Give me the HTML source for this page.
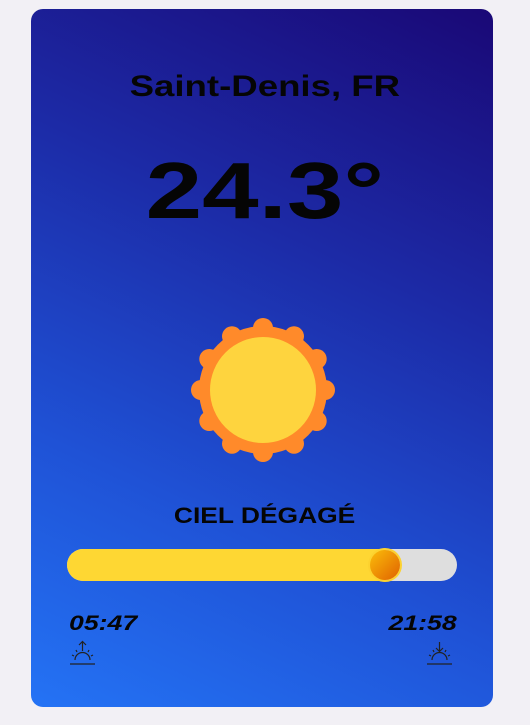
<!DOCTYPE html>
<html><head><meta charset="utf-8"><style>
html,body{margin:0;padding:0}
body{width:530px;height:725px;background:#f2f0f5;position:relative;overflow:hidden;font-family:"Liberation Sans",sans-serif;color:#050505}
.card{position:absolute;left:31px;top:9px;width:462px;height:698px;border-radius:12px;background:linear-gradient(205deg,#1a0876 0%,#1c2aa6 35%,#1f52d6 70%,#2473f5 100%);overflow:hidden}
.t{position:absolute;left:0;width:530px;text-align:center;font-weight:bold;white-space:nowrap}
.t span{display:inline-block}
.bar{position:absolute;left:67px;top:549px;width:390px;height:32px;border-radius:16px;background:#dedede;overflow:hidden}
.fill{position:absolute;left:0;top:0;height:32px;width:318px;background:#fed733}
.knob{position:absolute;left:370px;top:550px;width:30px;height:30px;border-radius:50%;background:linear-gradient(135deg,#fbbd0a,#e06200);box-shadow:0 0 0 2px #fcd22f}
.tm{position:absolute;top:612px;font-style:italic;font-weight:bold;font-size:21px}
</style></head><body>
<div class="card"></div>
<div class="t" style="top:70px;font-size:30px;"><span style="transform:scaleX(1.22)">Saint-Denis, FR</span></div>
<div class="t" style="top:145px;font-size:80px;"><span style="transform:scaleX(1.27)">24.3°</span></div>
<svg style="position:absolute;left:0;top:0" width="530" height="725">
<g fill="#ff8a2a">
<circle cx="263" cy="390" r="64"/>
<circle cx="263" cy="328" r="10"/><circle cx="294" cy="336.3" r="10"/><circle cx="316.7" cy="359" r="10"/><circle cx="325" cy="390" r="10"/><circle cx="316.7" cy="421" r="10"/><circle cx="294" cy="443.7" r="10"/><circle cx="263" cy="452" r="10"/><circle cx="232" cy="443.7" r="10"/><circle cx="209.3" cy="421" r="10"/><circle cx="201" cy="390" r="10"/><circle cx="209.3" cy="359" r="10"/><circle cx="232" cy="336.3" r="10"/>
</g>
<circle cx="263" cy="390" r="53" fill="#fed43e"/>
<g stroke="#222" stroke-width="1.2" fill="none">
<path d="M70 664h25M75 660a7.5 7.5 0 0 1 15 0M82.5 642v9M79 645l3.5-3.5 3.5 3.5M72 655l2 1M93 655l-2 1M76 650l1 2M89 650l-1 2"/>
<path d="M427 664h25M432 660a7.5 7.5 0 0 1 15 0M439.5 642v9M436 648l3.5 3.5 3.5-3.5M429 655l2 1M450 655l-2 1M433 650l1 2M446 650l-1 2"/>
</g>
</svg>
<div class="t" style="top:503px;font-size:22px;"><span style="transform:scaleX(1.2)">CIEL DÉGAGÉ</span></div>
<div class="bar"><div class="fill"></div></div>
<div class="knob"></div>
<div class="tm" style="left:69px;transform:scaleX(1.27);transform-origin:left">05:47</div>
<div class="tm" style="right:73px;transform:scaleX(1.27);transform-origin:right">21:58</div>
</body></html>
